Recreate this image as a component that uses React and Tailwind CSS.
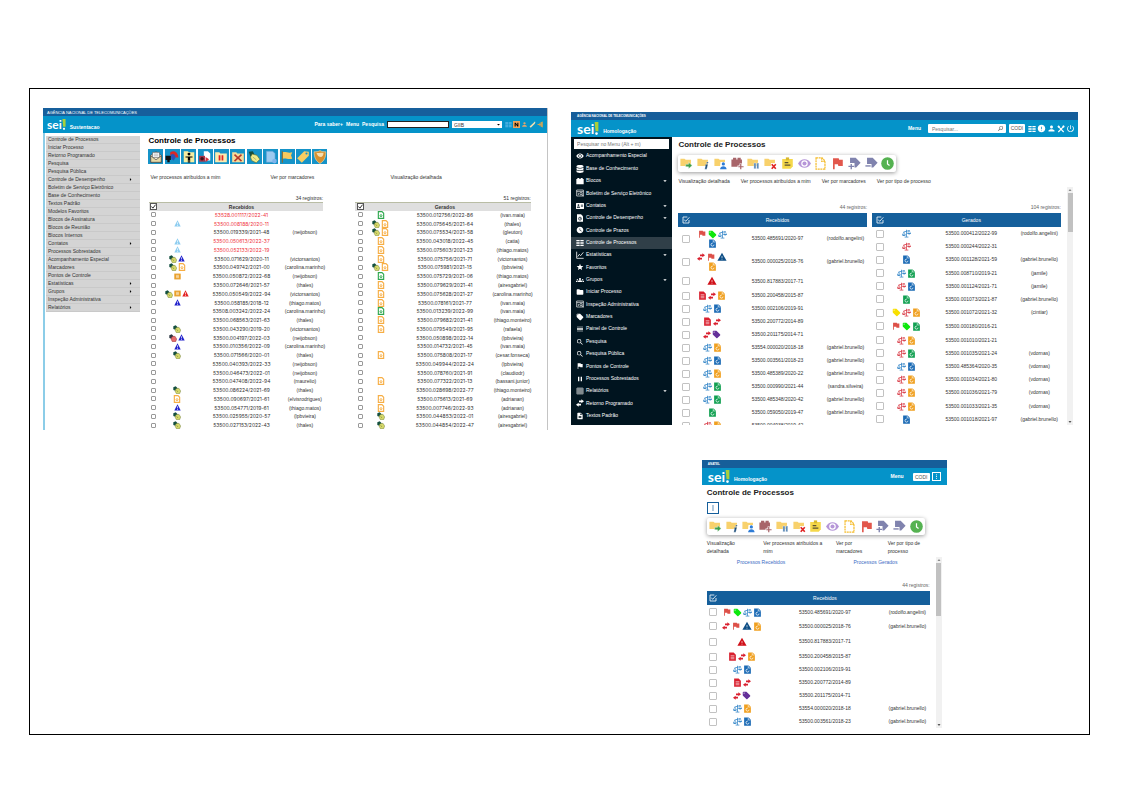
import React from "react";
import {
  MdVisibility, MdWatchLater, MdStar, MdGroups, MdFolder, MdLocalOffer, MdReorder, MdSearch, MdFlag,
  MdPause, MdGridOn, MdDescription, MdWarning, MdPerson, MdPowerSettingsNew, MdError,
  MdMoreVert, MdArrowDropDown, MdArrowRight,
} from "react-icons/md";
import { FaDatabase, FaAddressCard } from "react-icons/fa";

/* ---------- small glyphs ---------- */

const Svg = ({ children, className = "" }) => (
  <svg viewBox="0 0 24 24" fill="currentColor" aria-hidden="true" className={`shrink-0 ${className}`}>
    {children}
  </svg>
);

const DocGlyph = ({ className }) => (
  <Svg className={className}>
    <path d="M3 1h12l6 6v16H3z" />
    <circle cx="12" cy="15" r="4" fill="none" stroke="#fff" strokeWidth="2" strokeDasharray="18 6" />
    <path d="M14 2v6h6" fill="none" stroke="#fff" strokeWidth="1.6" />
  </Svg>
);
const DocLines = ({ className }) => (
  <Svg className={className}>
    <path d="M3 1h12l6 6v16H3z" />
    <path d="M7 10h10M7 14h10M7 18h10" stroke="#fff" strokeWidth="1.6" />
  </Svg>
);
const DocOutline = ({ className }) => (
  <Svg className={className}>
    <path d="M4 2h11l5 5v15H4z" fill="#fff" stroke="currentColor" strokeWidth="3.4" />
    <circle cx="12" cy="14" r="3" fill="none" stroke="currentColor" strokeWidth="2.8" />
  </Svg>
);
const DocTime = ({ className }) => (
  <Svg className={className}>
    <path d="M3 1h12l6 6v16H3z" />
    <circle cx="12" cy="14" r="4.5" fill="none" stroke="#00141f" strokeWidth="2" />
    <path d="M12 11v3h3" stroke="#00141f" strokeWidth="1.6" fill="none" />
  </Svg>
);
const Swap = ({ className }) => (
  <Svg className={className}>
    <path d="M16 1l8 6-8 6V9.500H9v-5h7z" />
    <path d="M8 11l-8 6 8 6v-3.500h7v-5H8z" />
  </Svg>
);
const Scales = ({ className }) => (
  <Svg className={className}>
    <path d="M12 2v19M7 21.500h10M4 8l16-4" fill="none" stroke="currentColor" strokeWidth="2" />
    <path d="M5 8l-4 8h8zM19 4l-4 8h8z" fill="none" stroke="currentColor" strokeWidth="1.400" />
    <path d="M0 15.500h10c-1 4-9 4-10 0zM14 11.500h10c-1 4-9 4-10 0z" />
  </Svg>
);
const Tools = ({ className }) => (
  <Svg className={className}>
    <path d="M4 4l16 17M20 4L4 21" fill="none" stroke="currentColor" strokeWidth="3.400" />
    <path d="M1 5l4-4 4 4-4 4zM16 3l4-2 3 3-2 4-4-1z" />
  </Svg>
);
const Blocks = ({ className }) => (
  <Svg className={className}>
    <path d="M1 6h3V3h6v3h4V3h6v3h3v16H1z" />
  </Svg>
);
const TableSearch = ({ className }) => (
  <Svg className={className}>
    <path d="M2 3h20v18H2zM2 8h20M7 12v6" fill="none" stroke="currentColor" strokeWidth="2" />
    <circle cx="15" cy="14" r="3.5" fill="none" stroke="currentColor" strokeWidth="2" />
    <path d="M17.5 16.500l5 5" stroke="currentColor" strokeWidth="2.400" />
  </Svg>
);
const TwoLists = ({ className }) => (
  <Svg className={className}>
    <path d="M1 3h10v3H1zM13 3h10v3H13zM1 8h10v3H1zM13 8h10v3H13zM1 13h10v3H1zM13 13h10v3H13zM1 18h10v3H1zM13 18h10v3H13z" />
  </Svg>
);
const Chart = ({ className }) => (
  <Svg className={className}>
    <path d="M2 2v20h21M5 17l5-7 4 4 8-10" fill="none" stroke="currentColor" strokeWidth="2.400" />
  </Svg>
);
const CheckSquare = ({ className }) => (
  <Svg className={className}>
    <path d="M21 12v9H3V3h13M7 11l4 5L22 4" fill="none" stroke="currentColor" strokeWidth="2.400" />
  </Svg>
);
const Note = ({ className }) => (
  <Svg className={className}>
    <path d="M1 4l7-3 6 6-5 8-8-3z" fill="#14503f" />
    <path d="M9 8l9-1 5 8-3 8H10l-4-8z" fill="#d6d96a" stroke="#5c6b2c" strokeWidth="1.200" />
    <path d="M11 13l4 5" stroke="#6d7334" strokeWidth="1.600" />
  </Svg>
);
const NoteRed = ({ className }) => (
  <Svg className={className}>
    <path d="M1 4l7-3 6 6-5 8-8-3z" fill="#2b3540" />
    <path d="M9 8l9-1 5 8-3 8H10l-4-8z" fill="#e66b6b" stroke="#8d2f36" strokeWidth="1.400" />
  </Svg>
);
const Triangle = ({ className }) => (
  <Svg className={className}>
    <path d="M12 1L23 22H1z" />
    <path d="M12 8v7M12 17v3" stroke="#fff" strokeWidth="2.400" />
  </Svg>
);
const OrangeBox = ({ className }) => (
  <Svg className={className}>
    <path d="M1 2h22v20H1z" />
    <path d="M7 8h10M7 12h10M7 16h10" stroke="#fff" strokeWidth="1.800" />
  </Svg>
);

const marks = {
  n: <Note className="size-[8px]" />,
  r: <NoteRed className="size-[8px]" />,
  b: <Triangle className="size-[7px] text-[#2222cc]" />,
  l: <Triangle className="size-[7px] text-[#8ecdf0]" />,
  e: <Triangle className="size-[7px] text-[#e32222]" />,
  o: <DocOutline className="size-[8px] text-[#f7ae45]" />,
  g: <DocOutline className="size-[8px] text-[#2fa84f]" />,
  x: <OrangeBox className="size-[7px] text-[#e9a02b]" />,
  F: <MdFlag className="size-[10px] shrink-0 text-[#dd5048]" />,
  T: <MdLocalOffer className="size-[9px] shrink-0 text-[#0de80d]" />,
  P: <MdLocalOffer className="size-[9px] shrink-0 text-[#64309a]" />,
  Y: <MdLocalOffer className="size-[9px] shrink-0 text-[#f8e000]" />,
  S: <Scales className="size-[9px] text-[#2b80c5]" />,
  R: <Scales className="size-[9px] text-[#d6333f]" />,
  B: <DocGlyph className="size-[9px] text-[#1c6bb5]" />,
  O: <DocGlyph className="size-[9px] text-[#f0a020]" />,
  G: <DocGlyph className="size-[9px] text-[#12a052]" />,
  D: <DocLines className="size-[9px] text-[#d9202f]" />,
  W: <Swap className="size-[8px] text-[#d9202f]" />,
  A: <MdWarning className="size-[10px] shrink-0 text-[#0f4f86]" />,
  E: <MdWarning className="size-[10px] shrink-0 text-[#d01018]" />,
};

const Marks = ({ code, className }) => (
  <div className={`flex flex-wrap items-center justify-center ${className}`}>
    {[...code].map((c, i) => (
      <React.Fragment key={i}>{marks[c]}</React.Fragment>
    ))}
  </div>
);

const Logo = ({ textClass, markClass }) => (
  <div className="flex items-center font-[Lato,sans-serif] font-bold">
    <span className={textClass}>sei</span>
    <svg viewBox="0 0 10 28" className={markClass} aria-hidden="true">
      <path d="M1 0h8v20H3z" fill="#a9cf3a" />
      <circle cx="5" cy="25" r="2.800" fill="#fff" />
    </svg>
  </div>
);

/* ---------- first window ---------- */

const oldMenu = [
  "Controle de Processos", "Iniciar Processo", "Retorno Programado", "Pesquisa", "Pesquisa Pública",
  "Controle de Desempenho>", "Boletim de Serviço Eletrônico", "Base de Conhecimento", "Textos Padrão",
  "Modelos Favoritos", "Blocos de Assinatura", "Blocos de Reunião", "Blocos Internos", "Contatos>",
  "Processos Sobrestados", "Acompanhamento Especial", "Marcadores", "Pontos de Controle", "Estatísticas>",
  "Grupos>", "Inspeção Administrativa", "Relatórios>",
];

const oldReceived = [
  ["", "53528.001117/2022-41", "", 1], ["l", "53500.008188/2020-11", "", 1], ["", "53500.019339/2021-48", "neijobson"],
  ["l", "53500.050613/2022-37", "", 1], ["l", "53500.052133/2022-19", "", 1], ["nb", "53500.071629/2020-11", "victorsantos"],
  ["no", "53500.049742/2021-00", "carolina.marinho"], ["x", "53500.050872/2022-68", "neijobson"], ["", "53500.072646/2021-57", "thales"],
  ["nxe", "53500.050549/2022-94", "victorsantos"], ["b", "53500.058185/2018-12", "thiago.matos"], ["", "53508.003242/2022-24", "carolina.marinho"],
  ["", "53500.068563/2021-63", "thales"], ["n", "53500.043290/2019-20", "victorsantos"], ["rb", "53500.004197/2022-03", "neijobson"],
  ["b", "53500.010356/2022-09", "carolina.marinho"], ["n", "53500.071566/2020-01", "thales"], ["", "53500.040393/2022-33", "neijobson"],
  ["", "53500.046473/2022-01", "neijobson"], ["", "53500.047408/2022-94", "maurelio"], ["n", "53500.086224/2021-69", "thales"],
  ["o", "53500.090697/2021-61", "elvisrodrigues"], ["b", "53500.054771/2019-61", "thiago.matos"], ["n", "53500.025955/2020-57", "lpbvieira"],
  ["n", "53500.027153/2022-43", "thales"],
];
const oldCreated = [
  ["g", "53500.012756/2022-86", "ivan.maia"], ["no", "53500.075645/2021-64", "thales"], ["no", "53500.075534/2021-58", "gleuton"],
  ["o", "53500.043018/2022-45", "catia"], ["o", "53500.075603/2021-23", "thiago.matos"], ["o", "53500.075756/2021-71", "victorsantos"],
  ["no", "53500.075981/2021-15", "lpbvieira"], ["g", "53500.075729/2021-06", "thiago.matos"], ["o", "53500.079629/2021-41", "airesgabriel"],
  ["o", "53500.075628/2021-27", "carolina.marinho"], ["o", "53500.078161/2021-77", "ivan.maia"], ["g", "53500.013239/2022-99", "ivan.maia"],
  ["o", "53500.079682/2021-41", "thiago.monteiro"], ["o", "53500.079549/2021-95", "rafaela"], ["", "53500.050898/2022-14", "lpbvieira"],
  ["", "53500.014732/2021-45", "ivan.maia"], ["o", "53500.075808/2021-17", "cesar.fonseca"], ["", "53500.049944/2022-24", "lpbvieira"],
  ["", "53500.078760/2021-91", "claudiodr"], ["o", "53500.077322/2021-13", "bassani.junior"], ["", "53500.028698/2022-77", "thiago.monteiro"],
  ["o", "53500.075613/2021-69", "adrianan"], ["o", "53500.007746/2022-93", "adrianan"], ["n", "53500.044853/2022-01", "airesgabriel"],
  ["n", "53500.044854/2022-47", "airesgabriel"],
];

const OldTable = ({ title, count, rows, cols }) => (
  <section>
    <p className="text-right text-[5px] leading-[8px]">{count} registros:</p>
    <table className="h-[228px] w-full table-fixed border-collapse text-center text-[5px] leading-[6px] whitespace-nowrap">
      <colgroup>{cols.map((c, i) => <col key={i} className={c} />)}</colgroup>
      <thead>
        <tr className="h-[8px] border-t border-[#b9bda5] bg-[#dfdfdf]">
          <th className="p-0">
            <button type="button" aria-label={`Selecionar todos: ${title}`} className="mx-auto block border border-[#555] bg-white">
              <Svg className="size-[5px] text-black"><path d="M2 12l7 8L22 3" fill="none" stroke="currentColor" strokeWidth="4" /></Svg>
            </button>
          </th>
          <td />
          <th className="p-0 font-bold">{title}</th>
          <td />
        </tr>
      </thead>
      <tbody>
        {rows.map(([m, num, who, red]) => (
          <tr key={num}>
            <td className="p-0">
              <input type="checkbox" aria-label={num}
                className="mx-auto block size-[5px] appearance-none rounded-[1px] border border-[#999]" />
            </td>
            <td className="p-0"><Marks code={m} className="h-[8px] gap-px" /></td>
            <td className="p-0 font-[Inter,sans-serif]">
              <a href="#processo" className={red ? "text-[#f0323c]" : "text-[#333]"}>{num}</a>
            </td>
            <td className="p-0"><div className="flex justify-center">{who && `(${who})`}</div></td>
          </tr>
        ))}
      </tbody>
    </table>
  </section>
);

const OldIcon = ({ kind }) => {
  const art = {
    mail: <><path d="M3 9l9-6 9 6v12H3z" fill="#f4ecd2" stroke="#333" /><path d="M6 4h12v9H6z" fill="#fff" stroke="#555" /><path d="M3 10l9 7 9-7v11H3z" fill="#e7d9a6" stroke="#333" /><path d="M8 7h8M8 10h8" stroke="#888" /></>,
    send: <><path d="M1 10h9v7H1zM4 17h4v4H4z" fill="#111" /><path d="M9 4c6-4 13-1 14 9h-5c-1-5-5-6-9-3z" fill="#d92828" /><path d="M10 8c4-3 8 0 8 5l-3 5-4-2z" fill="#2c50b8" /></>,
    person: <><path d="M3 2h7l2 2h9v17H3z" fill="#f6eda0" /><circle cx="12" cy="7" r="2.500" /><path d="M6 11h12v2h-4v9h-1.500v-5h-1v5H10v-9H6z" /></>,
    docs: <><path d="M10 2h7l4 4v12H10z" fill="#fff" /><path d="M2 10h10v10H2z" fill="#a83348" /><circle cx="7" cy="15" r="3" fill="#401018" /><path d="M13 12l6 4-6 5z" fill="#d62f3a" /></>,
    pause: <><path d="M2 4h7l2 2h11v15H2z" fill="#f9ebb0" /><path d="M8 9h3v9H8zM13 9h3v9h-3z" fill="#e02424" /></>,
    cancel: <><path d="M2 4h7l2 2h11v15H2z" fill="#f5dc9a" /><path d="M6 8l12 11M18 8L6 19" stroke="#b7372c" strokeWidth="2.600" /></>,
    note: <><path d="M3 3l7-1 3 6-7 4z" fill="#174f3d" /><path d="M9 7l8 2 5 7-6 6-8-4-2-6z" fill="#f0eb8c" stroke="#5f6a26" /><path d="M10 12l6 5" stroke="#8d9344" /></>,
    sheet: <><path d="M4 2h11l4 4v15H4z" fill="#9ccaf0" stroke="#5a9bd3" /><circle cx="18" cy="19" r="4" fill="#7fb4ec" /></>,
    flag: <><path d="M3 2h2v20H3z" fill="#8d6a2a" /><path d="M5 4c5-2 8 2 16 0l-2 5 2 6c-8 2-11-2-16 0z" fill="#f8c95e" /></>,
    tag: <><path d="M14 2l8 1v7L10 22l-8-8z" fill="#f9cd62" /><circle cx="18" cy="6" r="1.800" fill="#1593c8" /></>,
    shield: <><path d="M12 1c3 2 6 2 10 2 0 10-3 16-10 20C5 19 2 13 2 3c4 0 7 0 10-2z" fill="#d9902f" stroke="#f5e3b4" /><path d="M6 5c4 0 8-1 12 0 0 4-2 6-4 7-4 0-7-3-8-7z" fill="#f6e0b0" /></>,
  };
  return (
    <svg viewBox="0 0 24 24" aria-hidden="true" className="size-[14px]">{art[kind]}</svg>
  );
};

const oldTools = [
  ["mail", "Enviar"], ["send", "Atualizar andamento"], ["person", "Atribuir"], ["docs", "Incluir"], ["pause", "Sobrestar"],
  ["cancel", "Concluir"], ["note", "Anotações"], ["sheet", "Documento"], ["flag", "Ponto de controle"], ["tag", "Marcador"], ["shield", "Restrição"],
];

const OldWindow = () => (
  <article className="min-w-0 border-r border-[#c4c4c4] text-[5px] text-[#333]">
    <div className="h-[8px] bg-[#165f9c] px-[4px] text-[4px] leading-[9px] text-white">AGÊNCIA NACIONAL DE TELECOMUNICAÇÕES</div>
    <header className="flex h-[17px] items-center bg-[#0593c9] pr-[3px] pl-[4px] font-bold text-white">
      <Logo textClass="text-[12px] leading-[16px]" markClass="h-[11px] w-[4px]" />
      <span className="mt-[6px] ml-[4px]">Sustentacao</span>
      <nav className="ml-auto flex items-center gap-[3px]">
        <a href="#saber">Para saber+</a>
        <a href="#menu">Menu</a>
        <label htmlFor="old-search">Pesquisa</label>
        <input id="old-search" type="text" className="h-[7px] w-[62px] border border-[#222] bg-white text-black" />
        <div className="relative flex items-center">
          <select aria-label="Unidade" className="h-[7px] w-[50px] appearance-none bg-white pl-[2px] text-[5px] leading-[6px] font-normal text-[#333]">
            <option>GIIB</option>
          </select>
          <MdArrowDropDown className="pointer-events-none absolute right-0 size-[7px] text-black" />
        </div>
        <div className="flex items-center gap-px">
          <a href="#lista" aria-label="Lista"><TwoLists className="size-[7px] text-[#58b7e6]" /></a>
          <a href="#novidades" aria-label="Novidades" className="flex size-[7px] items-center justify-center bg-[#f0a45a]">
            <Svg className="size-[5px] text-black"><path d="M3 21V3h5l8 11V3h5v18h-5L8 10v11z" /></Svg>
          </a>
          <a href="#usuario" aria-label="Usuário"><MdPerson className="size-[7px] text-[#e3a56d]" /></a>
          <a href="#config" aria-label="Configurações">
            <Svg className="size-[7px] text-[#f0dfb2]"><path d="M2 19L16 6l4-4 2 1-2 6L6 23z" /></Svg>
          </a>
          <a href="#sair" aria-label="Sair">
            <Svg className="size-[7px] text-[#c9a45a]"><path d="M12 4l8-2v20l-8-3zM2 10h6V6l6 6-6 6v-4H2z" /></Svg>
          </a>
        </div>
      </nav>
    </header>
    <div className="flex border-l-2 border-[#8ccde8]">
      <nav className="w-[19%] pt-[3px] pl-px">
        <ul className="bg-[#d4d4d4]">
          {oldMenu.map((item) => (
            <li key={item} className="border-b border-[#c9c9c9]">
              <a href="#menu" className="flex h-[7px] items-center justify-between pr-[6px] pl-[2px] leading-[7px] whitespace-nowrap">
                {item.replace(">", "")}
                {item.endsWith(">") && <MdArrowRight className="size-[7px] text-black" />}
              </a>
            </li>
          ))}
        </ul>
      </nav>
      <div className="min-w-0 flex-1 pt-[2px] pr-[16px] pl-[8px]">
        <h1 className="text-[8px] leading-[12px] font-bold text-black">Controle de Processos</h1>
        <div className="mt-[2px] flex w-[179px] justify-between">
          {oldTools.map(([k, label]) => (
            <button key={k} type="button" aria-label={label} className="flex size-[15px] items-center justify-center bg-[#1593c8]">
              <OldIcon kind={k} />
            </button>
          ))}
        </div>
        <div className="mt-[9px] flex pl-[2px] leading-[8px]">
          <a href="#meus" className="w-[120px]">Ver processos atribuídos a mim</a>
          <a href="#marcadores" className="w-[120px]">Ver por marcadores</a>
          <a href="#detalhada">Visualização detalhada</a>
        </div>
        <div className="mt-[13px] grid grid-cols-[174fr_176fr] gap-[32px] pl-[1px]">
          <OldTable title="Recebidos" count="34" rows={oldReceived} cols={["w-[5%]", "w-[22%]", "w-[52%]", "w-[21%]"]} />
          <OldTable title="Gerados" count="51" rows={oldCreated} cols={["w-[6%]", "w-[17%]", "w-[56%]", "w-[21%]"]} />
        </div>
      </div>
    </div>
  </article>
);

/* ---------- new windows ---------- */

const menuItems = [
  [MdVisibility, "Acompanhamento Especial"], [FaDatabase, "Base de Conhecimento"], [Blocks, "Blocos", 1],
  [TableSearch, "Boletim de Serviço Eletrônico"], [FaAddressCard, "Contatos", 1], [DocTime, "Controle de Desempenho", 1],
  [MdWatchLater, "Controle de Prazos"], [TwoLists, "Controle de Processos"], [Chart, "Estatísticas", 1], [MdStar, "Favoritos"],
  [MdGroups, "Grupos", 1], [MdFolder, "Iniciar Processo"], [TableSearch, "Inspeção Administrativa"], [MdLocalOffer, "Marcadores"],
  [MdReorder, "Painel de Controle"], [MdSearch, "Pesquisa"], [MdSearch, "Pesquisa Pública"], [MdFlag, "Pontos de Controle"],
  [MdPause, "Processos Sobrestados"], [MdGridOn, "Relatórios", 1], [Swap, "Retorno Programado"], [MdDescription, "Textos Padrão"],
];

const Folder = () => <path d="M1 4h10l3 3h13v15H1z" fill="#f8d16c" />;
const toolArt = {
  "Enviar Processo": <><Folder /><path d="M14 18h7v-5l9 8-9 8v-5h-7z" fill="#3f9f49" stroke="#fff" /></>,
  "Atualizar Andamento": <><Folder /><path d="M24 12h4l-1 4h-4zM22 18h5l-3 12h-5l2-9h-2z" fill="#1d4f7c" stroke="#fff" strokeWidth="0.800" /></>,
  "Atribuição de Processos": <><Folder /><path d="M16 12h14v18H14z" fill="#fff" /><circle cx="23" cy="17" r="4" fill="#2e7cd6" /><path d="M15 30c0-10 16-10 16 0z" fill="#2e7cd6" /></>,
  "Incluir em Bloco": <><path d="M1 6h4V2h8v4h3V2h8v4h3v18H1z" fill="#a8656a" /><path d="M24 16v15M16 24h15" stroke="#fff" strokeWidth="6" /><path d="M24 17v13M18 24h13" stroke="#a8656a" strokeWidth="3" /></>,
  "Sobrestar Processo": <><Folder /><path d="M17 15h5v14h-5zM24 15h5v14h-5z" fill="#4c7fb0" stroke="#fff" /></>,
  "Concluir Processo": <><Folder /><path d="M17 15h13v15H17z" fill="#fff" /><path d="M19 18l10 11M29 18L19 29" stroke="#e02222" strokeWidth="4" /></>,
  "Anotações": <><path d="M3 5h26v18l-5 6H3z" fill="#f5d84a" /><path d="M12 1h8v7h-8z" fill="#d9b92e" /><path d="M9 14h9M9 20h14" stroke="#5b5230" strokeWidth="3" /></>,
  "Acompanhamento Especial": <><path d="M0 16C7 2 25 2 32 16 25 30 7 30 0 16z" fill="#b696d8" /><circle cx="16" cy="16" r="8" fill="#fff" /><circle cx="16" cy="16" r="5" fill="#b696d8" /></>,
  "Incluir Documento": <path d="M5 2h15l7 8v20H5zM19 2v9h8" fill="none" stroke="#f5bd2f" strokeWidth="3" strokeDasharray="5 1.500" />,
  "Ponto de Controle": <path d="M5 3h14l1 4h9v15H18l-1-4H9v12H5z" fill="#e2574c" />,
  "Adicionar Marcador": <><path d="M5 2h14l12 12-11 12h-4V15H5z" fill="#8083ae" /><path d="M8 17v13M1 23h14" stroke="#8083ae" strokeWidth="3.400" /></>,
  "Remover Marcador": <><path d="M5 2h14l12 12-11 12h-4v-9H5z" fill="#8083ae" /><path d="M1 22h13" stroke="#8083ae" strokeWidth="3.400" /></>,
  "Controle de Prazo": <><circle cx="16" cy="16" r="15.500" fill="#55b251" /><path d="M16 8v9l5 4" fill="none" stroke="#fff" strokeWidth="3" /></>,
};

const Toolbar = () => (
  <div className="flex w-[218px] items-center justify-between rounded-[2px] bg-white px-[2px] py-[2px] shadow-[0_1px_4px_rgba(0,0,0,0.4)]">
    {Object.entries(toolArt).map(([label, art]) => (
      <button key={label} type="button" aria-label={label} title={label} className="block">
        <svg viewBox="0 0 32 32" aria-hidden="true" className="size-[13px]">{art}</svg>
      </button>
    ))}
  </div>
);

const fullReceived = [
  ["FTSB", "53500.485691/2020-97", "rodolfo.angelini"], ["WFAO", "53500.000025/2018-76", "gabriel.brunello"],
  ["E", "53500.817883/2017-71", ""], ["DWO", "53500.200458/2015-87", ""], ["SB", "53500.002106/2019-91", ""],
  ["DW", "53500.200772/2014-89", ""], ["WP", "53500.201175/2014-71", ""], ["SO", "53554.000020/2018-18", "gabriel.brunello"],
  ["SB", "53500.003561/2018-23", "gabriel.brunello"], ["SO", "53500.485389/2020-22", "gabriel.brunello"],
  ["SG", "53500.000990/2021-44", "sandra.silveira"], ["SG", "53500.485348/2020-42", "gabriel.brunello"],
  ["G", "53500.059050/2019-47", "gabriel.brunello"], ["RO", "53500.004938/2019-42", ""],
];
const created = [
  ["S", "53500.000412/2022-99", "rodolfo.angelini"], ["R", "53500.000244/2022-31", ""], ["B", "53500.001128/2021-59", "gabriel.brunello"],
  ["SG", "53500.008710/2019-21", "jamile"], ["RB", "53500.001124/2021-71", "jamile"], ["G", "53500.001073/2021-87", "gabriel.brunello"],
  ["YRO", "53500.001072/2021-32", "cintiar"], ["FTG", "53500.000180/2016-21", ""], ["RO", "53500.001010/2021-21", ""],
  ["RG", "53500.001035/2021-24", "vdornas"], ["SB", "53500.485364/2020-35", "vdornas"], ["RO", "53500.001034/2021-80", "vdornas"],
  ["RO", "53500.001036/2021-79", "vdornas"], ["RO", "53500.001033/2021-35", "vdornas"], ["B", "53500.001018/2021-97", "gabriel.brunello"],
];

const NewTable = ({ title, count, rows, heights, cols, marksWidth, tableClass = "" }) => (
  <section className="min-w-0 flex-1">
    <p className="text-right text-[5px] leading-[9px] text-[#666]">{count} registros:</p>
    <table className={`mt-px w-full table-fixed border-collapse text-center text-[5px] leading-[7px] whitespace-nowrap ${tableClass}`}>
      <colgroup>{cols.map((c, i) => <col key={i} className={c} />)}</colgroup>
      <thead>
        <tr className="h-[14px] bg-[#155f9b] text-white">
          <th className="p-0">
            <button type="button" aria-label={`Selecionar todos: ${title}`} className="mx-auto block">
              <CheckSquare className="size-[8px]" />
            </button>
          </th>
          <td />
          <th className="p-0 font-normal">{title}</th>
          <td />
        </tr>
      </thead>
      <tbody>
        {rows.map(([m, num, who], i) => (
          <tr key={num} className={heights[i] || heights[heights.length - 1]}>
            <td className="p-0">
              <input type="checkbox" aria-label={num}
                className="mx-auto block size-[8px] appearance-none rounded-[1px] border border-[#c2c2c2] bg-white" />
            </td>
            <td className="p-0"><Marks code={m} className={`mx-auto gap-x-px ${marksWidth}`} /></td>
            <td className="p-0"><a href="#processo">{num}</a></td>
            <td className="p-0"><div className="flex justify-center">{who && `(${who})`}</div></td>
          </tr>
        ))}
      </tbody>
    </table>
  </section>
);

const ScrollTrack = ({ thumb }) => (
  <div className="flex w-[6px] shrink-0 flex-col items-center bg-[#f1f1f1]" aria-hidden="true">
    <Svg className="size-[6px] text-[#8a8a8a]"><path d="M12 8l6 8H6z" /></Svg>
    <div className={`w-[5px] bg-[#c1c1c1] ${thumb}`} />
    <Svg className="mt-auto size-[6px] text-[#555]"><path d="M12 16l6-8H6z" /></Svg>
  </div>
);

const TopBar = ({ org, children }) => (
  <>
    <div className="h-[8px] bg-[#165e9a] px-[6px] text-[3px] leading-[9px] font-bold text-white">{org}</div>
    <header className="flex h-[17px] items-center bg-[#0593c9] pr-[3px] pl-[6px] text-[5px] font-bold text-white">
      <Logo textClass="text-[14px] leading-[16px]" markClass="h-[13px] w-[5px]" />
      <span className="mt-[6px] ml-[4px]">Homologação</span>
      <nav className="ml-auto flex items-center">{children}</nav>
    </header>
  </>
);

const WideWindow = () => (
  <article className="text-[5px] text-[#333]">
    <TopBar org="AGÊNCIA NACIONAL DE TELECOMUNICAÇÕES">
      <a href="#menu" className="mr-[7px]">Menu</a>
      <div className="relative flex items-center">
        <input type="search" aria-label="Pesquisar" placeholder="Pesquisar..."
          className="h-[9px] w-[78px] rounded-[1px] bg-white px-[4px] text-[5px] font-normal text-black placeholder:text-[#777]" />
        <MdSearch className="pointer-events-none absolute right-[2px] size-[7px] -scale-x-100 text-[#555]" />
      </div>
      <button type="button" className="mx-[3px] h-[9px] w-[16px] rounded-[1px] bg-white text-[5px] leading-[9px] font-normal text-[#555]">CODI</button>
      <div className="flex items-center gap-px">
        <a href="#lista" aria-label="Lista"><TwoLists className="size-[8px]" /></a>
        <a href="#avisos" aria-label="Avisos"><MdError className="size-[9px]" /></a>
        <a href="#usuario" aria-label="Usuário"><MdPerson className="size-[9px]" /></a>
        <a href="#config" aria-label="Configurações"><Tools className="size-[8px]" /></a>
        <a href="#sair" aria-label="Sair"><MdPowerSettingsNew className="size-[9px]" /></a>
      </div>
    </TopBar>
    <div className="flex h-[288px] overflow-hidden">
      <nav className="w-[20%] shrink-0 bg-[#00141f] pt-[2px] text-white">
        <input type="search" aria-label="Pesquisar no Menu" placeholder="Pesquisar no Menu (Alt + m)"
          className="mx-auto block h-[10px] w-[94%] bg-white px-[3px] text-[5px] text-black placeholder:text-[#777]" />
        <ul className="flex h-[273px] flex-col pt-px">
          {menuItems.map(([Icon, label, sub]) => (
            <li key={label} className="flex flex-1">
              <a href="#menu"
                className={`flex flex-1 items-center pr-[3px] pl-[5px] ${label === "Controle de Processos" ? "bg-[#303f48]" : ""}`}>
                <Icon className="size-[8px] shrink-0" />
                <span className="ml-[2px] flex-1 whitespace-nowrap">{label}</span>
                {sub && <MdArrowDropDown className="size-[8px] shrink-0" />}
              </a>
            </li>
          ))}
        </ul>
      </nav>
      <div className="flex min-w-0 flex-1 flex-col pt-[2px] pr-[5px] pl-[6px]">
        <h1 className="text-[8px] leading-[11px] font-bold text-[#222]">Controle de Processos</h1>
        <div className="mt-[5px] flex"><Toolbar /></div>
        <div className="mt-[6px] flex gap-[11px] leading-[7px] whitespace-nowrap">
          <a href="#detalhada">Visualização detalhada</a>
          <a href="#meus">Ver processos atribuídos a mim</a>
          <a href="#marcadores">Ver por marcadores</a>
          <a href="#tipo">Ver por tipo de processo</a>
        </div>
        <div className="mt-[2px] flex min-h-0 flex-1 gap-[6px]">
          <div className="flex min-w-0 flex-1 items-start gap-[5px] overflow-hidden pt-[16px]">
            <NewTable title="Recebidos" count="44" rows={fullReceived} marksWidth="w-[32px]"
              heights={["h-[23px]", "h-[23px]", "h-[16px]", "h-[13px]"]}
              cols={["w-[8%]", "w-[20%]", "w-[49%]", "w-[23%]"]} />
            <NewTable title="Gerados" count="104" rows={created} marksWidth="w-[32px]" heights={[""]} tableClass="h-[213px]"
              cols={["w-[8%]", "w-[20%]", "w-[49%]", "w-[23%]"]} />
          </div>
          <ScrollTrack thumb="h-[39px]" />
        </div>
      </div>
    </div>
  </article>
);

const NarrowWindow = () => (
  <article className="text-[5px] text-[#333]">
    <TopBar org="ANATEL">
      <a href="#menu" className="mr-[9px]">Menu</a>
      <button type="button" className="h-[8px] w-[17px] rounded-[1px] bg-white text-[5px] leading-[8px] font-normal text-[#555]">CODI</button>
      <button type="button" aria-label="Mais opções" className="mr-[3px] ml-[2px] flex size-[9px] items-center justify-center border border-white">
        <MdMoreVert className="size-[7px]" />
      </button>
    </TopBar>
    <div className="px-[5px] pt-[2px]">
      <h1 className="text-[8px] leading-[11px] font-bold text-[#222]">Controle de Processos</h1>
      <button type="button" aria-label="Abrir menu" className="mt-[4px] flex size-[12px] items-center justify-center border border-[#155f9b] text-[#155f9b]">
        <MdMoreVert className="size-[8px]" />
      </button>
      <div className="mt-[4px] flex"><Toolbar /></div>
      <div className="mt-[4px] grid grid-cols-[24%_31%_22%_1fr] leading-[8px]">
        <a href="#detalhada">Visualização<br />detalhada</a>
        <a href="#meus">Ver processos atribuídos a<br />mim</a>
        <a href="#marcadores">Ver por<br />marcadores</a>
        <a href="#tipo">Ver por tipo de<br />processo</a>
      </div>
      <div className="mt-[2px] flex h-[171px] gap-[6px] overflow-hidden">
        <div className="min-w-0 flex-1">
          <div className="mb-[14px] grid grid-cols-2 gap-[6px] text-center leading-[10px] text-[#3b6cc4]">
            <a href="#recebidos">Processos Recebidos</a>
            <a href="#gerados">Processos Gerados</a>
          </div>
          <NewTable title="Recebidos" count="44" rows={fullReceived.slice(0, 9)} marksWidth=""
            heights={["h-[14px]", "h-[14px]", "h-[17px]", "h-[13px]"]}
            cols={["w-[6%]", "w-[20%]", "w-[54%]", "w-[20%]"]} />
        </div>
        <ScrollTrack thumb="h-[53px]" />
      </div>
    </div>
  </article>
);

export default function App() {
  return (
    <main className="min-h-screen bg-white pt-[88px] pr-[33px] pb-[59px] pl-[29px] font-['Liberation_Sans',Arial,sans-serif]">
      <div className="grid min-h-[647px] grid-cols-[505fr_507fr] items-start gap-[23px] border border-black pt-[19px] pr-[11px] pb-[6px] pl-[13px]">
        <OldWindow />
        <div className="flex min-w-0 flex-col gap-[35px] pt-[4px]">
          <WideWindow />
          <div className="ml-[25.8%] w-[48.3%]">
            <NarrowWindow />
          </div>
        </div>
      </div>
    </main>
  );
}
